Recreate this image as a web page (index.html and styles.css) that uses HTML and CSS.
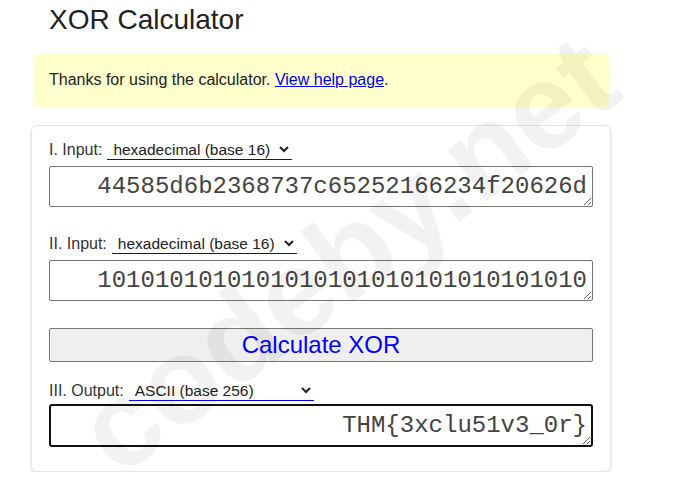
FILE: index.html
```html
<!DOCTYPE html>
<html lang="en">
<head>
<meta charset="utf-8">
<title>XOR Calculator</title>
<link rel="stylesheet" href="styles.css">
</head>
<body>
<div class="page">
  <h1 class="title">XOR Calculator</h1>
  <div class="notice">Thanks for using the calculator. <a href="#" class="notice-link">View help page</a>.</div>
  <form class="card">
    <div class="field-row">
      <label class="field-label" for="in1">I. Input:</label>
      <select class="base-select" id="in1">
        <option>hexadecimal (base 16)</option>
      </select>
    </div>
    <textarea class="value-box">44585d6b2368737c65252166234f20626d</textarea>

    <div class="field-row row-gap">
      <label class="field-label" for="in2">II. Input:</label>
      <select class="base-select" id="in2">
        <option>hexadecimal (base 16)</option>
      </select>
    </div>
    <textarea class="value-box">1010101010101010101010101010101010</textarea>

    <button type="button" class="calc-btn">Calculate XOR</button>

    <div class="field-row out-row">
      <label class="field-label" for="out">III. Output:</label>
      <select class="base-select" id="out">
        <option>ASCII (base 256)</option>
      </select>
    </div>
    <textarea class="value-box output-box">THM{3xclu51v3_0r}</textarea>
  </form>
  <div class="watermark">codeby.net</div>
</div>
</body>
</html>
```
FILE: styles.css
```css
html, body {
  margin: 0;
  padding: 0;
  background: #ffffff;
}

body {
  font-family: "Liberation Sans", Arial, sans-serif;
  color: #222;
}

.page {
  position: relative;
  width: 580px;
  margin-left: 31px;
  padding-top: 4px;
}

.title {
  margin: 0 0 0 18px;
  font-size: 28px;
  line-height: 32px;
  font-weight: normal;
  color: #222;
}

.notice {
  margin: 17px 2px 0 2px;
  padding: 18px 16px;
  background: #ffffcc;
  border-radius: 6px;
  font-size: 16px;
  line-height: 18px;
  color: #222;
}

.notice-link {
  color: #0000ee;
  text-decoration: underline;
}

.card {
  margin: 18px 0 0 0;
  padding: 13px 17px 24px 17px;
  border: 1px solid #e4e4e4;
  border-radius: 6px;
  box-shadow: 0 2px 3px rgba(0, 0, 0, 0.12);
  display: flex;
  flex-direction: column;
}

.field-row {
  display: flex;
  align-items: baseline;
  gap: 5px;
  height: 21px;
}

.row-gap {
  margin-top: 26px;
}

.out-row {
  margin-top: 18px;
}

.field-label {
  font-size: 16px;
  color: #333;
}

.base-select {
  width: 185px;
  height: 21px;
  font-family: "Liberation Sans", Arial, sans-serif;
  font-size: 15.5px;
  color: #222;
  background: transparent;
  border: none;
  border-bottom: 1px solid #0000ff;
  border-radius: 0;
  padding: 0 0 0 2px;
}

.value-box {
  box-sizing: border-box;
  width: 544px;
  height: 41px;
  margin: 6px 0 0 0;
  padding: 6px 5px;
  border: 1px solid #767676;
  border-radius: 2px;
  font-family: "Liberation Mono", "Courier New", monospace;
  font-size: 24px;
  line-height: 27px;
  color: #444;
  text-align: right;
  overflow: hidden;
  background: #fff;
}

.output-box {
  height: 43px;
  margin-top: 3px;
  border: 2px solid #111;
  border-radius: 3px;
  padding: 6px 4px;
}

.calc-btn {
  box-sizing: border-box;
  width: 544px;
  height: 34px;
  margin-top: 27px;
  padding: 0;
  background: #efefef;
  border: 1px solid #767676;
  border-radius: 2px;
  font-family: "Liberation Sans", Arial, sans-serif;
  font-size: 24px;
  color: #0000ff;
}

.watermark {
  position: absolute;
  left: 316px;
  top: 254px;
  width: max-content;
  transform: translate(-50%, -50%) rotate(-37deg);
  font-family: "Liberation Sans", Arial, sans-serif;
  font-weight: bold;
  font-size: 122px;
  line-height: 1;
  white-space: nowrap;
  color: rgba(0, 0, 0, 0.05);
  pointer-events: none;
}
```
